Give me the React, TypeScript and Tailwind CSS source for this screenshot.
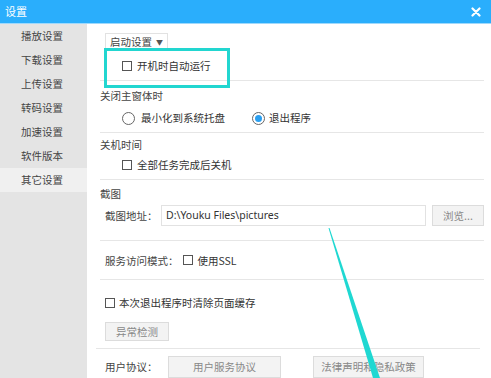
import React from 'react';

const cjk = '"Noto Sans CJK SC", "Noto Sans", sans-serif';

const navItems = ['播放设置', '下载设置', '上传设置', '转码设置', '加速设置', '软件版本', '其它设置'];

const Checkbox = () => (
  <span className="inline-block w-[10px] h-[10px] border border-[#555] bg-white shrink-0" />
);

const Radio = ({ checked }: { checked?: boolean }) => (
  <span className="w-[13px] h-[13px] rounded-full border border-[#666] bg-white flex items-center justify-center shrink-0">
    {checked && <span className="w-[7px] h-[7px] rounded-full bg-[#2a9ff0]" />}
  </span>
);

const Btn = ({ children, className = '' }: { children: React.ReactNode; className?: string }) => (
  <div className={`flex items-center justify-center bg-[#f3f3f3] border border-[#dcdcdc] text-[#888] ${className}`}>
    {children}
  </div>
);

export default function App() {
  return (
    <div className="w-[491px] h-[378px] overflow-hidden bg-white flex flex-col relative text-[10.5px] text-[#333]" style={{ fontFamily: cjk }}>
      {/* Title bar */}
      <div className="h-[24px] shrink-0 bg-[#2aaefc] border-b border-[#9fd9fc] flex items-center justify-between pl-[5px] pr-[10px]">
        <span className="text-white text-[11px]">设置</span>
        <svg width="10" height="10" viewBox="0 0 10 10">
          <path d="M1.5 1.5 L8.5 8.5 M8.5 1.5 L1.5 8.5" stroke="white" strokeWidth="2.2" strokeLinecap="round" />
        </svg>
      </div>

      <div className="flex flex-1 min-h-0">
        {/* Sidebar */}
        <div className="w-[87px] shrink-0 bg-[#e4e4e4] flex flex-col text-[#444]">
          {navItems.map((item) => (
            <div
              key={item}
              className={`h-[24px] flex items-center pl-[21px] ${item === '其它设置' ? 'bg-[#f0f0f0]' : ''}`}
            >
              {item}
            </div>
          ))}
        </div>

        {/* Content */}
        <div className="flex-1 flex flex-col pl-[13px] pr-[10px] relative">
          {/* Startup */}
          <div className="flex flex-col border-b border-[#e6e6e6]">
            <div className="mt-[9px] ml-[5px] h-[18px] w-[63px] border border-[#e2e2e2] flex items-center pl-[4px] gap-[4px] text-[#444]">
              启动设置
              <span className="text-[7px] text-[#555]">▼</span>
            </div>
            <div className="h-[29px] flex items-center pl-[22px] gap-[5px] relative">
              <Checkbox />
              <span>开机时自动运行</span>
              <div className="absolute left-[4px] top-[-3px] w-[126px] h-[40px] border-[3px] border-[#22d6d0]" />
            </div>
          </div>

          {/* Close main window */}
          <div className="flex flex-col border-b border-[#e6e6e6] pt-[4px] pb-[3px]">
            <div className="h-[22px] flex items-center text-[#444]">关闭主窗体时</div>
            <div className="h-[22px] flex items-center pl-[22px]">
              <Radio />
              <span className="ml-[6px]">最小化到系统托盘</span>
              <span className="ml-[27px]"><Radio checked /></span>
              <span className="ml-[4px]">退出程序</span>
            </div>
          </div>

          {/* Shutdown */}
          <div className="flex flex-col border-b border-[#e6e6e6] pb-[6px]">
            <div className="h-[24px] flex items-center text-[#444]">关机时间</div>
            <div className="h-[16px] flex items-center pl-[22px] gap-[5px]">
              <Checkbox />
              <span>全部任务完成后关机</span>
            </div>
          </div>

          {/* Screenshot */}
          <div className="flex flex-col border-b border-[#e6e6e6] pt-[3px] pb-[14px]">
            <div className="h-[22px] flex items-center text-[#444]">截图</div>
            <div className="h-[21px] flex items-center pl-[5px]">
              <span className="w-[56px] text-[#444]">截图地址：</span>
              <div
                className="w-[265px] h-[21px] border border-[#e2e2e2] flex items-center pl-[4px] text-[#333] text-[10.5px]"
                style={{ fontFamily: '"Noto Sans", sans-serif' }}
              >
                D:\Youku Files\pictures
              </div>
              <Btn className="ml-[6px] w-[52px] h-[21px]">浏览...</Btn>
            </div>
          </div>

          {/* Service mode */}
          <div className="h-[43px] flex items-center pl-[5px] pt-[2px] border-b border-[#e6e6e6]">
            <span className="text-[#444]">服务访问模式：</span>
            <span className="ml-[4px]"><Checkbox /></span>
            <span className="ml-[5px]">使用SSL</span>
          </div>

          {/* Cache */}
          <div className="flex flex-col border-b border-[#e6e6e6] pt-[12px] pb-[7px] ml-[-4px] mr-[4px] pl-[9px]">
            <div className="h-[22px] flex items-center gap-[4px]">
              <Checkbox />
              <span>本次退出程序时清除页面缓存</span>
            </div>
            <Btn className="mt-[8px] w-[64px] h-[19px]">异常检测</Btn>
          </div>

          {/* Agreements */}
          <div className="flex items-center pl-[5px] mt-[7px]">
            <span className="w-[63px] text-[#444]">用户协议：</span>
            <Btn className="w-[113px] h-[22px]">用户服务协议</Btn>
            <Btn className="ml-[32px] w-[111px] h-[22px]">法律声明和隐私政策</Btn>
          </div>
        </div>
      </div>

      {/* Annotation arrow */}
      <svg className="absolute left-0 top-0 pointer-events-none" width="491" height="378" viewBox="0 0 491 378">
        <polygon points="328.5,228 329.5,228 380,378 373,378" fill="#1fd8d2" />
      </svg>
    </div>
  );
}
